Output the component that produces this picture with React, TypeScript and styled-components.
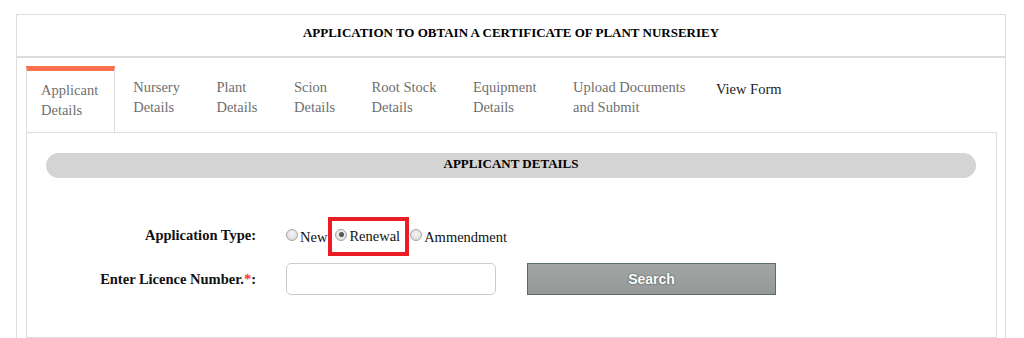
import React from "react";
import styled, { createGlobalStyle } from "styled-components";

const GlobalStyle = createGlobalStyle`
  html, body {
    margin: 0;
    padding: 0;
    background: #fff;
    font-family: "Liberation Serif", "Times New Roman", serif;
  }
`;

const Page = styled.div`
  padding: 14px 18px 0 16px;
  height: 338px;
  box-sizing: border-box;
  overflow: hidden;
`;

const Panel = styled.div`
  border: 1px solid #ddd;
  border-bottom: none;
  height: 100%;
  box-sizing: border-box;
  display: flex;
  flex-direction: column;
`;

const PanelHeader = styled.div`
  height: 43px;
  box-sizing: border-box;
  padding-top: 8px;
  border-bottom: 2px solid #ddd;
  text-align: center;
  font-size: 13px;
  line-height: 20px;
  font-weight: bold;
  color: #000;
`;

const PanelBody = styled.div`
  flex: 1;
  padding: 8px 8px 0 9px;
  display: flex;
  flex-direction: column;
`;

const TabBar = styled.div`
  display: flex;
  align-items: flex-start;
  border-bottom: 1px solid #ddd;
`;

const Tab = styled.div<{ $active?: boolean; $single?: boolean }>`
  box-sizing: border-box;
  font-size: 14.5px;
  line-height: 20px;
  white-space: nowrap;
  border-top: 5px solid ${(p) => (p.$active ? "#fe6f4e" : "transparent")};
  border-left: 1px solid ${(p) => (p.$active ? "#ddd" : "transparent")};
  border-right: 1px solid ${(p) => (p.$active ? "#ddd" : "transparent")};
  background: #fff;
  color: ${(p) => (p.$single ? "#222" : "#6f6f6f")};
  padding: ${(p) =>
    p.$active ? "9px 16px 10px 14px" : p.$single ? "8px 16px 0 11px" : "6px 17.5px 15px 17px"};
  margin-bottom: ${(p) => (p.$active ? "-1px" : "0")};
  height: ${(p) => (p.$active ? "66px" : "auto")};
  cursor: pointer;
`;

const Content = styled.div`
  flex: 1;
  border: 1px solid #ddd;
  border-top: none;
  padding: 20px 20px 0 19px;
`;

const SectionBar = styled.div`
  height: 25px;
  box-sizing: border-box;
  padding-top: 1px;
  border-radius: 13px;
  background: #d4d4d4;
  text-align: center;
  font-size: 13px;
  line-height: 20px;
  font-weight: bold;
  color: #000;
`;

const Form = styled.div`
  margin-top: 46px;
  display: flex;
  flex-direction: column;
  gap: 14px;
`;

const Row = styled.div`
  display: grid;
  grid-template-columns: 210px auto;
  column-gap: 30px;
  align-items: center;
`;

const Label = styled.label<{ $raise?: boolean }>`
  text-align: right;
  font-size: 14.5px;
  line-height: 20px;
  font-weight: bold;
  color: #111;
  padding-bottom: ${(p) => (p.$raise ? "4px" : "0")};
`;

const Required = styled.span`
  color: #f33;
`;

const RadioGroup = styled.div`
  display: flex;
  align-items: center;
  gap: 8px;
  font-size: 14.5px;
  line-height: 20px;
  color: #111;
`;

const RadioOption = styled.label<{ $marked?: boolean }>`
  display: inline-flex;
  align-items: center;
  gap: 1px;
  padding: ${(p) => (p.$marked ? "2px 2px 3px 0" : "0")};
  outline: ${(p) => (p.$marked ? "4px solid #ec1c24" : "none")};
  outline-offset: 3px;
`;

const Radio = styled.input.attrs({ type: "radio" })`
  appearance: none;
  -webkit-appearance: none;
  margin: 0 1px 3px 0;
  width: 12px;
  height: 12px;
  border-radius: 50%;
  border: 1px solid #a4a4a4;
  background: radial-gradient(circle at 50% 35%, #f4f4f4 0%, #d8d8d8 100%);
  box-sizing: border-box;
  position: relative;
  &:checked::after {
    content: "";
    position: absolute;
    left: 2.5px;
    top: 2.5px;
    width: 5px;
    height: 5px;
    border-radius: 50%;
    background: #555;
  }
`;

const Controls = styled.div`
  display: flex;
  align-items: center;
`;

const TextInput = styled.input`
  width: 210px;
  height: 32px;
  box-sizing: border-box;
  border: 1px solid #ccc;
  border-radius: 5px;
  padding: 0 8px;
  font-size: 14px;
`;

const SearchButton = styled.button`
  margin-left: 31px;
  width: 249px;
  height: 32px;
  box-sizing: border-box;
  border: 1px solid #5a6b68;
  background: linear-gradient(#a1a6a4, #959a98);
  color: #fff;
  font-family: "Liberation Sans", Arial, sans-serif;
  font-weight: bold;
  font-size: 14px;
  text-shadow: 0 0 2px #34413f;
  cursor: pointer;
`;

const tabs = [
  ["Applicant", "Details"],
  ["Nursery", "Details"],
  ["Plant", "Details"],
  ["Scion", "Details"],
  ["Root Stock", "Details"],
  ["Equipment", "Details"],
  ["Upload Documents", "and Submit"],
];

export default function App() {
  return (
    <>
      <GlobalStyle />
      <Page>
        <Panel>
          <PanelHeader>APPLICATION TO OBTAIN A CERTIFICATE OF PLANT NURSERIEY</PanelHeader>
          <PanelBody>
            <TabBar>
              {tabs.map(([a, b], i) => (
                <Tab key={a} $active={i === 0}>
                  {a}
                  <br />
                  {b}
                </Tab>
              ))}
              <Tab $single>View Form</Tab>
            </TabBar>
            <Content>
              <SectionBar>APPLICANT DETAILS</SectionBar>
              <Form>
                <Row>
                  <Label $raise>Application Type:</Label>
                  <RadioGroup>
                    <RadioOption>
                      <Radio name="apptype" />
                      New
                    </RadioOption>
                    <RadioOption $marked>
                      <Radio name="apptype" defaultChecked />
                      Renewal
                    </RadioOption>
                    <RadioOption>
                      <Radio name="apptype" />
                      Ammendment
                    </RadioOption>
                  </RadioGroup>
                </Row>
                <Row>
                  <Label>
                    Enter Licence Number.<Required>*</Required>:
                  </Label>
                  <Controls>
                    <TextInput />
                    <SearchButton>Search</SearchButton>
                  </Controls>
                </Row>
              </Form>
            </Content>
          </PanelBody>
        </Panel>
      </Page>
    </>
  );
}
